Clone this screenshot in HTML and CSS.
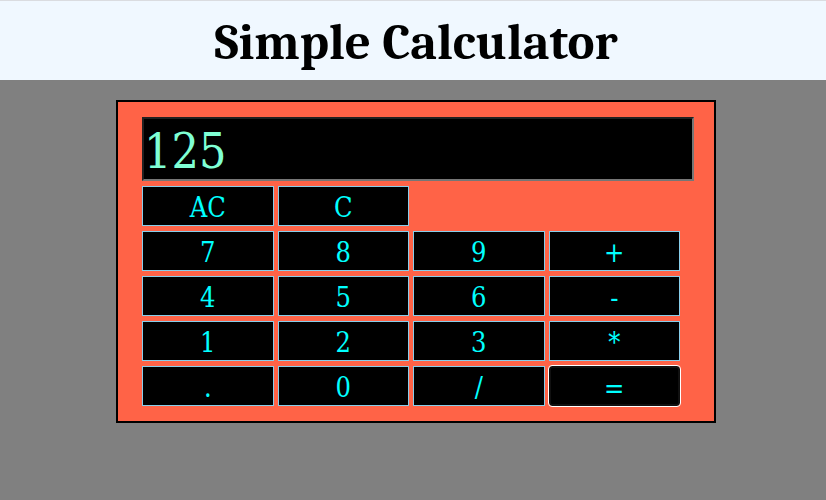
FILE: index.html
```html
<!DOCTYPE html>
<html lang="en">
<head>
<meta charset="utf-8">
<title>Simple Calculator</title>
<link rel="stylesheet" href="styles.css">
</head>
<body>
<header class="header"><h1 class="title">Simple Calculator</h1></header>
<main class="main">
  <form class="calculator">
    <input class="display" type="text" value="125" aria-label="Result">
    <div class="keys">
      <button class="key" type="button">AC</button>
      <button class="key" type="button">C</button>
      <button class="key row-start" type="button">7</button>
      <button class="key" type="button">8</button>
      <button class="key" type="button">9</button>
      <button class="key" type="button">+</button>
      <button class="key" type="button">4</button>
      <button class="key" type="button">5</button>
      <button class="key" type="button">6</button>
      <button class="key" type="button">-</button>
      <button class="key" type="button">1</button>
      <button class="key" type="button">2</button>
      <button class="key" type="button">3</button>
      <button class="key" type="button">*</button>
      <button class="key" type="button">.</button>
      <button class="key" type="button">0</button>
      <button class="key" type="button">/</button>
      <button class="key active" type="button">=</button>
    </div>
  </form>
</main>
</body>
</html>
```
FILE: styles.css
```css
* { box-sizing: border-box; }

body {
  margin: 0;
  background: #808080;
  font-family: Cambria, Caladea, "Liberation Serif", serif;
}

.header {
  padding: 12px 0 8px 6px;
  border-top: 1px solid #dadce0;
  background: aliceblue;
}

.title {
  margin: 0;
  font-size: 51px;
  line-height: 59px;
  text-align: center;
}

.main { padding: 20px 0 20px 6px; }

.calculator {
  max-width: 600px;
  margin: 0 auto;
  padding: 15px 20px 15px 24px;
  border: 2px solid #000;
  background: tomato;
}

.display {
  display: block;
  width: 100%;
  height: 64px;
  padding: 4px 0 0;
  border: 2px inset #767676;
  border-radius: 0;
  background: #000;
  color: aquamarine;
  font-family: "DejaVu Serif Condensed", "DejaVu Serif", serif;
  font-size: 48px;
}

.keys {
  display: grid;
  grid-template-columns: repeat(4, 1fr);
  grid-auto-rows: 40px;
  gap: 5px 4px;
  margin-top: 5px;
  padding-right: 14px;
}

.key {
  padding: 4px 0 0;
  border: 1px solid skyblue;
  border-radius: 0;
  background: #000;
  color: cyan;
  font-family: "DejaVu Serif Condensed", "DejaVu Serif", serif;
  font-size: 27px;
  line-height: 34px;
}

.row-start { grid-column-start: 1; }

.active {
  border: 2px solid #101010;
  border-radius: 3px;
  outline: 1px solid #fff;
}
```
